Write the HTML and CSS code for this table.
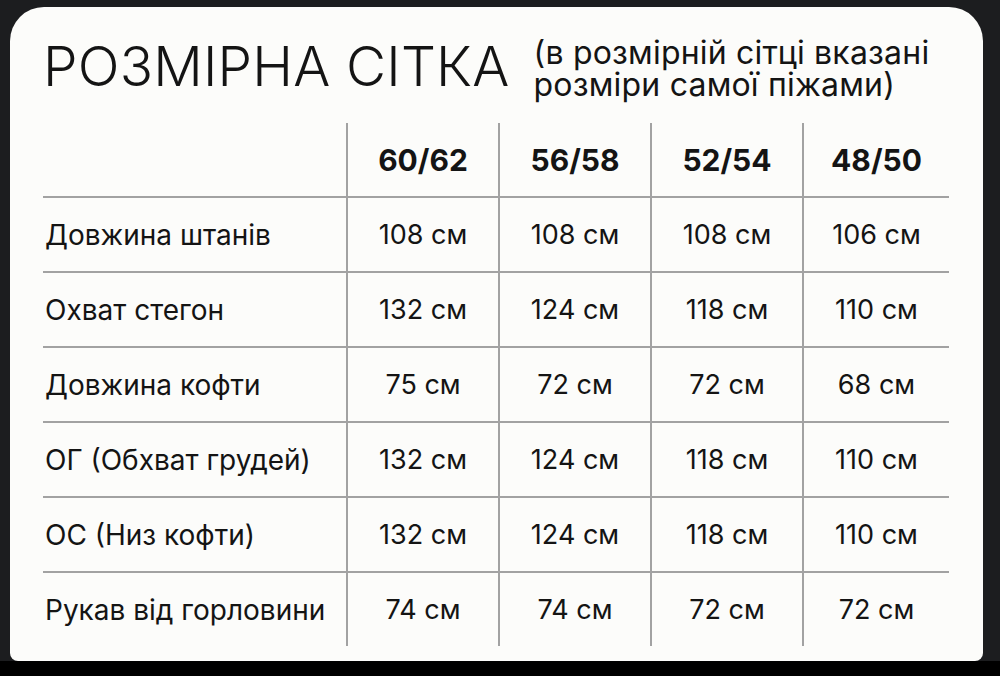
FILE: index.html
```html
<!DOCTYPE html>
<html lang="uk">
<head>
<meta charset="utf-8">
<title>Розмірна сітка</title>
<link rel="stylesheet" href="styles.css">
</head>
<body>
<div class="frame">
  <div class="card">
    <header class="head">
      <h1 class="title">РОЗМІРНА СІТКА</h1>
      <p class="note">(в розмірній сітці вказані<br>розміри самої піжами)</p>
    </header>
    <table class="grid">
      <colgroup>
        <col class="c-label"><col class="c-size"><col class="c-size"><col class="c-size"><col class="c-last">
      </colgroup>
      <thead>
        <tr><th></th><th>60/62</th><th>56/58</th><th>52/54</th><th>48/50</th></tr>
      </thead>
      <tbody>
        <tr><td>Довжина штанів</td><td>108 см</td><td>108 см</td><td>108 см</td><td>106 см</td></tr>
        <tr><td>Охват стегон</td><td>132 см</td><td>124 см</td><td>118 см</td><td>110 см</td></tr>
        <tr><td>Довжина кофти</td><td>75 см</td><td>72 см</td><td>72 см</td><td>68 см</td></tr>
        <tr><td>ОГ (Обхват грудей)</td><td>132 см</td><td>124 см</td><td>118 см</td><td>110 см</td></tr>
        <tr><td>ОС (Низ кофти)</td><td>132 см</td><td>124 см</td><td>118 см</td><td>110 см</td></tr>
        <tr><td>Рукав від горловини</td><td>74 см</td><td>74 см</td><td>72 см</td><td>72 см</td></tr>
      </tbody>
    </table>
  </div>
</div>
<div class="bottom"></div>
</body>
</html>
```
FILE: styles.css
```css
html, body {
  margin: 0;
  padding: 0;
}
body {
  width: 1000px;
  height: 676px;
  background: #1c1d1f;
  font-family: Inter, "Noto Sans", sans-serif;
  color: #141414;
  display: flex;
  flex-direction: column;
  overflow: hidden;
}
.frame {
  height: 661px;
  padding: 7px 17px 0 10px;
  box-sizing: border-box;
}
.card {
  height: 654px;
  background: #fcfcfa;
  border-radius: 34px 34px 8px 8px;
  box-sizing: border-box;
  padding: 28px 0 0 33px;
}
.bottom {
  flex: 1;
  background: #000;
}
.head {
  display: flex;
  align-items: flex-start;
  height: 88px;
}
.title {
  margin: 0;
  font-weight: 300;
  font-size: 55px;
  line-height: 62px;
  letter-spacing: 0.2px;
}
.note {
  margin: 2px 0 0 24px;
  font-size: 32px;
  line-height: 32px;
  font-weight: 400;
  letter-spacing: 0.2px;
}
.grid {
  border-collapse: collapse;
  table-layout: fixed;
  width: 906px;
}
.c-label { width: 304px; }
.c-size { width: 152px; }
.c-last { width: 146px; }
.grid th, .grid td {
  height: 73px;
  padding: 0;
  text-align: center;
  vertical-align: middle;
  border-left: 2px solid #a2a2a2;
  border-top: 2px solid #a2a2a2;
}
.grid th {
  font-size: 30px;
  font-weight: 700;
  border-top: none;
}
.grid td {
  font-size: 27px;
  font-weight: 400;
}
.grid th:first-child, .grid td:first-child {
  border-left: none;
  text-align: left;
  padding-left: 2px;
  font-size: 28px;
}
```
